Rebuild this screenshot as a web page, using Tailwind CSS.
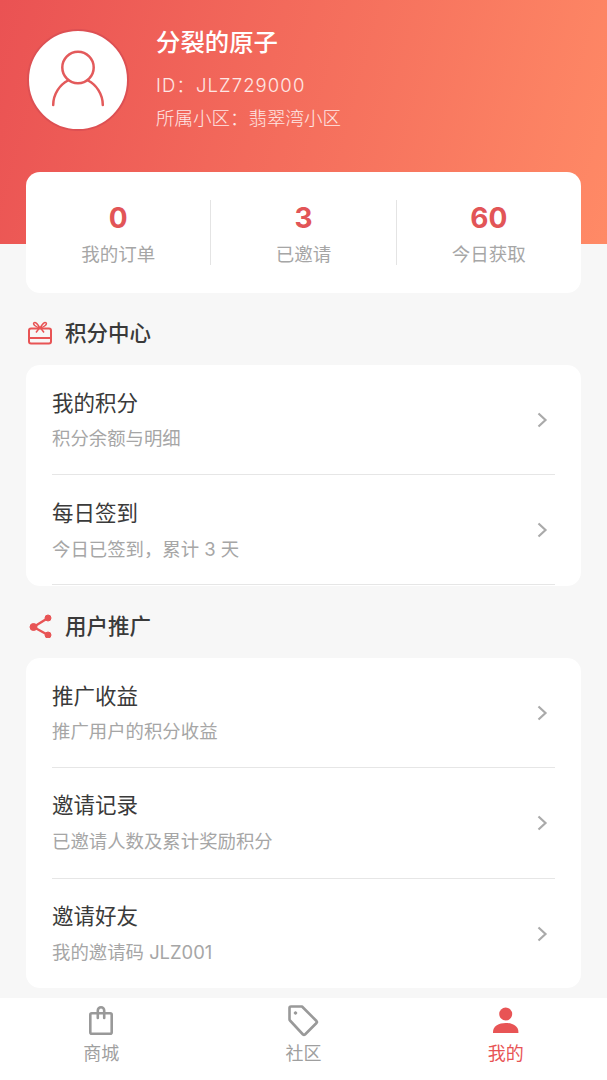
<!DOCTYPE html>
<html lang="zh-CN">
<head>
  <meta charset="utf-8"/>
  <title>我的</title>
  <script src="https://cdn.jsdelivr.net/npm/@tailwindcss/browser@4"></script>
</head>
<body class="bg-[#f7f7f7] font-['Inter','Noto_Sans_CJK_SC',sans-serif]">
  <div class="w-[607px] h-[1080px] overflow-hidden flex flex-col">
    <!-- header -->
    <div class="h-[244px] shrink-0 bg-[linear-gradient(105deg,#ea5253,#ff8a66)] pl-[27px] pt-[29px] flex items-start gap-[27px]">
      <div class="w-[102px] h-[102px] rounded-full bg-white border-2 border-[#dd5053] flex items-center justify-center">
        <svg class="w-[60px] h-[60px]" viewBox="0 0 60 60" fill="none" stroke="#e35a5b" stroke-width="2.500" stroke-linecap="round">
          <circle cx="30" cy="17.500" r="15.700"/>
          <path d="M5.200 55C5.200 44 12 34.500 20 30.500M54.800 55C54.800 44 48 34.500 40 30.500"/>
        </svg>
      </div>
      <div class="flex flex-col text-white -mt-[3px]">
        <div class="text-[24.4px] leading-[32px] font-medium">分裂的原子</div>
        <div class="text-[18.5px] leading-[28px] mt-[13px] text-white/85 font-light tracking-[1.1px]">ID：JLZ729000</div>
        <div class="text-[18.5px] leading-[28px] mt-[5px] text-white/85 font-light">所属小区：翡翠湾小区</div>
      </div>
    </div>

    <div class="px-[26px] flex flex-col">
      <!-- stats -->
      <div class="-mt-[72px] h-[121px] bg-white rounded-[14px] flex items-center">
        <div class="flex-1 flex flex-col items-center pt-[4px]">
          <div class="text-[28px] leading-[34px] font-bold text-[#e25557]">0</div>
          <div class="text-[18.5px] leading-[28px] mt-[5px] text-[#a6a6a6]">我的订单</div>
        </div>
        <div class="w-px h-[65px] bg-[#e4e4e4]"></div>
        <div class="flex-1 flex flex-col items-center pt-[4px]">
          <div class="text-[28px] leading-[34px] font-bold text-[#e25557]">3</div>
          <div class="text-[18.5px] leading-[28px] mt-[5px] text-[#a6a6a6]">已邀请</div>
        </div>
        <div class="w-px h-[65px] bg-[#e4e4e4]"></div>
        <div class="flex-1 flex flex-col items-center pt-[4px]">
          <div class="text-[28px] leading-[34px] font-bold text-[#e25557]">60</div>
          <div class="text-[18.5px] leading-[28px] mt-[5px] text-[#a6a6a6]">今日获取</div>
        </div>
      </div>

      <!-- 积分中心 -->
      <div class="h-[72px] pt-[8px] flex items-center gap-[13px] pl-[2px]">
        <svg class="w-[24px] h-[24px]" viewBox="0 0 24 24" fill="none" stroke="#e85455" stroke-width="2">
          <rect x="1" y="7.500" width="22" height="15" rx="2"/>
          <path d="M1 17h22" stroke-width="2"/>
          <path d="M12 7C10 3.500 7.500 0.500 6 1.800S7.500 6 12 7zM12 7C14 3.500 16.500 0.500 18 1.800S16.500 6 12 7z" stroke-width="1.500"/>
          <path d="M11 7.500L8 11.500M13 7.500l3 4" stroke-width="1.500"/>
        </svg>
        <div class="text-[21.5px] leading-[30px] font-medium text-[#3a3a3a]">积分中心</div>
      </div>
      <div class="bg-white rounded-[14px] h-[221px] px-[26px] flex flex-col">
        <div class="h-[110px] shrink-0 border-b border-[#e6e6e6] flex items-center justify-between">
          <div class="flex flex-col pb-[1px]">
            <div class="text-[21.5px] leading-[30px] text-[#3a3a3a]">我的积分</div>
            <div class="text-[18.4px] leading-[26px] mt-[7px] text-[#a6a6a6]">积分余额与明细</div>
          </div>
          <svg class="w-[12px] h-[16px] mr-[7px]" viewBox="0 0 12 16" fill="none" stroke="#aaaaaa" stroke-width="2.200"><path d="M2.500 1.500l7 6.500-7 6.500"/></svg>
        </div>
        <div class="h-[110px] shrink-0 border-b border-[#e6e6e6] flex items-center justify-between">
          <div class="flex flex-col">
            <div class="text-[21.5px] leading-[30px] text-[#3a3a3a]">每日签到</div>
            <div class="text-[18.4px] leading-[26px] mt-[8px] text-[#a6a6a6]">今日已签到，累计 3 天</div>
          </div>
          <svg class="w-[12px] h-[16px] mr-[7px]" viewBox="0 0 12 16" fill="none" stroke="#aaaaaa" stroke-width="2.200"><path d="M2.500 1.500l7 6.500-7 6.500"/></svg>
        </div>
      </div>

      <!-- 用户推广 -->
      <div class="h-[72px] pt-[8px] flex items-center gap-[13px] pl-[2px]">
        <svg class="w-[24px] h-[24px]" viewBox="0 0 24 24" fill="#e85455" stroke="#e85455">
          <circle cx="5.500" cy="13" r="3.500"/>
          <circle cx="20" cy="4" r="3"/>
          <circle cx="20" cy="21" r="3"/>
          <path d="M5.500 13L20 4M5.500 13L20 21" fill="none" stroke-width="2.400"/>
        </svg>
        <div class="text-[21.5px] leading-[30px] font-medium text-[#3a3a3a]">用户推广</div>
      </div>
      <div class="bg-white rounded-[14px] h-[330px] px-[26px] flex flex-col">
        <div class="h-[110px] shrink-0 border-b border-[#e6e6e6] flex items-center justify-between">
          <div class="flex flex-col pb-[1px]">
            <div class="text-[21.5px] leading-[30px] text-[#3a3a3a]">推广收益</div>
            <div class="text-[18.4px] leading-[26px] mt-[7px] text-[#a6a6a6]">推广用户的积分收益</div>
          </div>
          <svg class="w-[12px] h-[16px] mr-[7px]" viewBox="0 0 12 16" fill="none" stroke="#aaaaaa" stroke-width="2.200"><path d="M2.500 1.500l7 6.500-7 6.500"/></svg>
        </div>
        <div class="h-[111px] shrink-0 border-b border-[#e6e6e6] flex items-center justify-between">
          <div class="flex flex-col pb-[2px]">
            <div class="text-[21.5px] leading-[30px] text-[#3a3a3a]">邀请记录</div>
            <div class="text-[18.4px] leading-[26px] mt-[8px] text-[#a6a6a6]">已邀请人数及累计奖励积分</div>
          </div>
          <svg class="w-[12px] h-[16px] mr-[7px]" viewBox="0 0 12 16" fill="none" stroke="#aaaaaa" stroke-width="2.200"><path d="M2.500 1.500l7 6.500-7 6.500"/></svg>
        </div>
        <div class="h-[109px] shrink-0 flex items-center justify-between">
          <div class="flex flex-col pb-[2px]">
            <div class="text-[21.5px] leading-[30px] text-[#3a3a3a]">邀请好友</div>
            <div class="text-[18.4px] leading-[26px] mt-[8px] text-[#a6a6a6]">我的邀请码 JLZ001</div>
          </div>
          <svg class="w-[12px] h-[16px] mr-[7px]" viewBox="0 0 12 16" fill="none" stroke="#aaaaaa" stroke-width="2.200"><path d="M2.500 1.500l7 6.500-7 6.500"/></svg>
        </div>
      </div>
    </div>

    <!-- tab bar -->
    <div class="mt-[10px] flex-1 bg-white grid grid-cols-3 items-start pt-[7px]">
      <div class="flex flex-col items-center">
        <svg class="w-[30px] h-[32px]" viewBox="0 0 30 32" fill="none" stroke="#999999" stroke-width="2.600" stroke-linejoin="round">
          <rect x="4.300" y="8.300" width="21.400" height="20.400" rx="1.500"/>
          <path d="M11.800 13V5.500a3.200 3.200 0 0 1 6.400 0V13" stroke-linecap="round"/>
        </svg>
        <div class="text-[18px] leading-[26px] mt-[4px] text-[#9f9f9f]">商城</div>
      </div>
      <div class="flex flex-col items-center">
        <svg class="w-[32px] h-[32px]" viewBox="0 0 32 32" fill="none" stroke="#999999" stroke-width="2.600" stroke-linejoin="round">
          <path d="M2.500 3a1.500 1.500 0 0 1 1.500-1.500h11l14.500 14.500a1.500 1.500 0 0 1 0 2L18 29.500a1.500 1.500 0 0 1-2 0L3 15.500a2 2 0 0 1-.500-1.500z"/>
          <circle cx="8.500" cy="8" r="1.300" fill="#999999" stroke-width="1"/>
        </svg>
        <div class="text-[18px] leading-[26px] mt-[4px] text-[#9f9f9f]">社区</div>
      </div>
      <div class="flex flex-col items-center">
        <svg class="w-[30px] h-[32px]" viewBox="0 0 30 32" fill="#e85455">
          <circle cx="14.700" cy="9" r="6.500"/>
          <path d="M2 28v-1c0-6 6-9 12.700-9s12.700 3 12.700 9v1z"/>
        </svg>
        <div class="text-[18px] leading-[26px] mt-[4px] text-[#e85455]">我的</div>
      </div>
    </div>
  </div>
</body>
</html>
